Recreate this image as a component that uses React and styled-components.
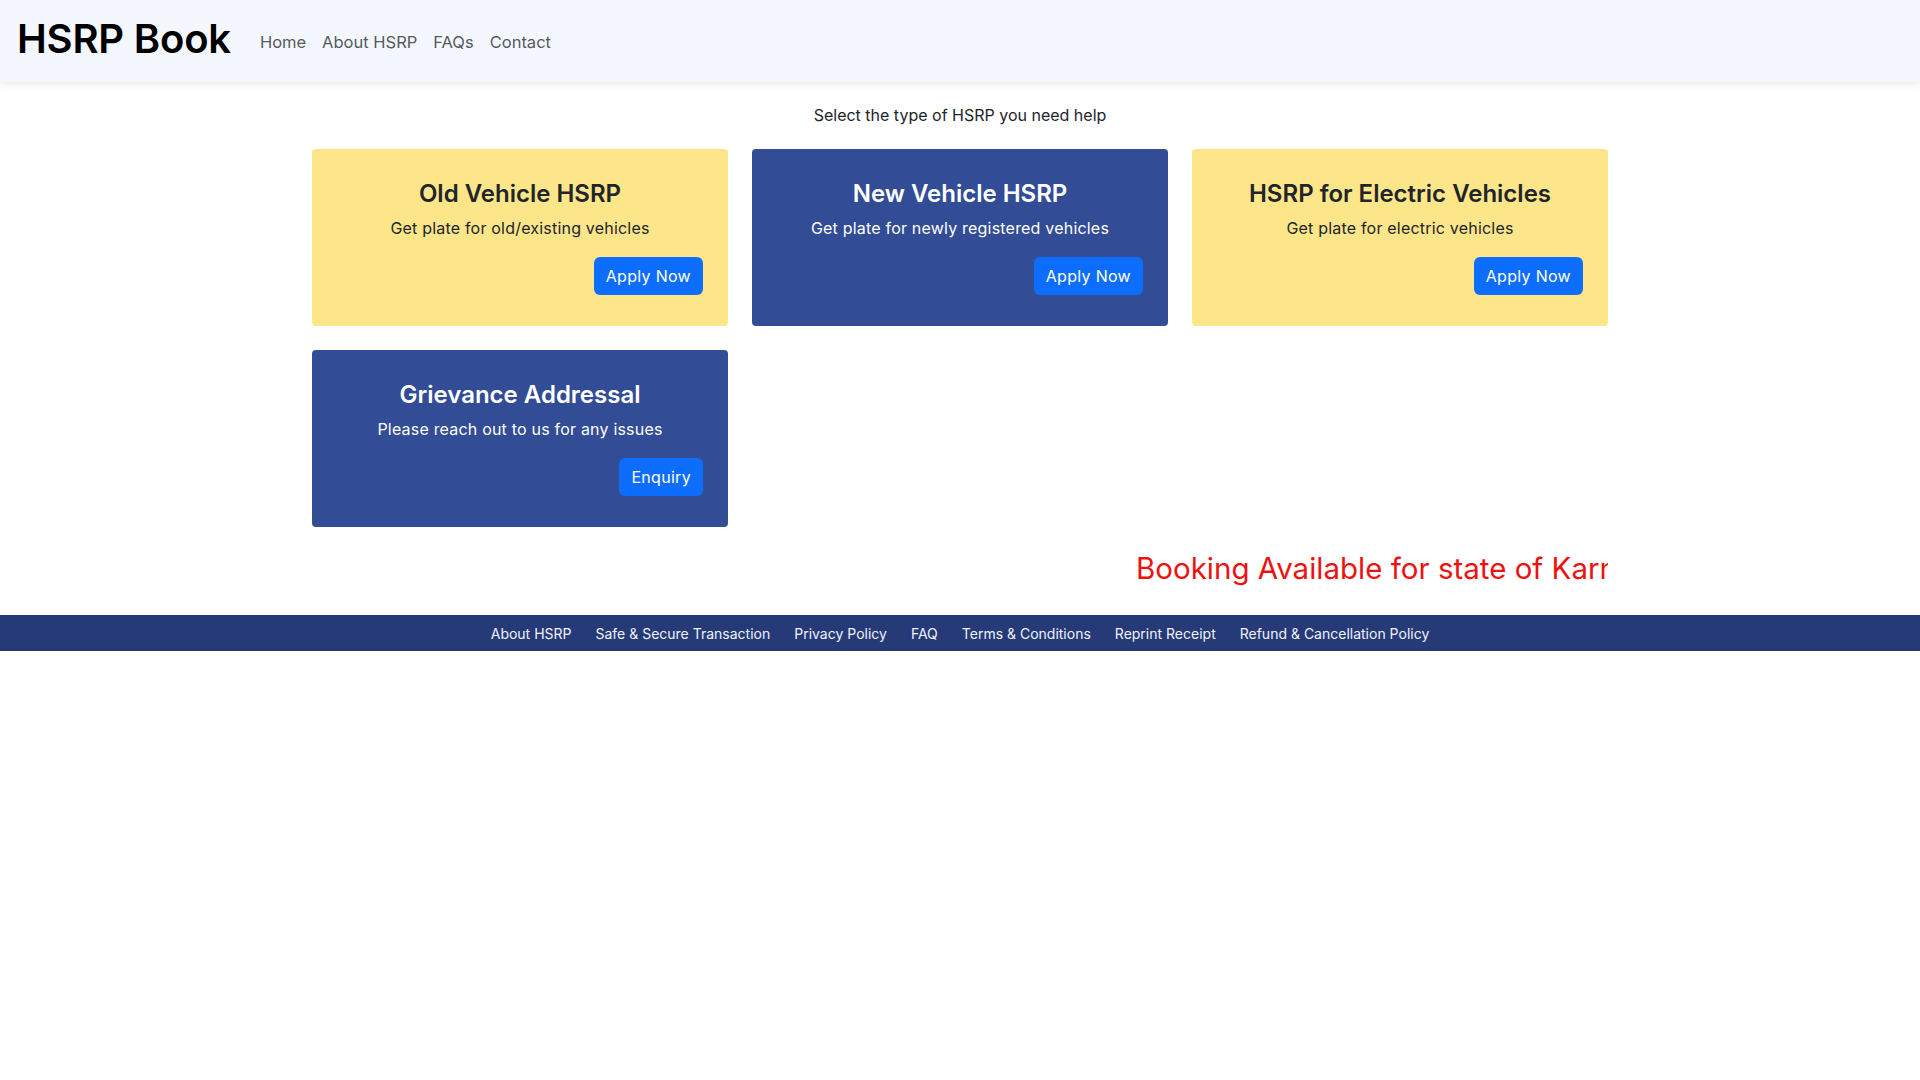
import React from 'react';
import styled, { createGlobalStyle } from 'styled-components';

const GlobalStyle = createGlobalStyle`
  body {
    margin: 0;
    background: #ffffff;
    font-family: Inter, "Open Sans", Arial, sans-serif;
    color: #212529;
  }
  * {
    box-sizing: border-box;
  }
`;

const Header = styled.header`
  height: 82px;
  display: flex;
  align-items: center;
  padding: 0 17px;
  background-color: #f4f8fe;
  box-shadow: 0 2px 8px rgba(0, 0, 0, 0.09);
`;

const Brand = styled.a`
  font-size: 40px;
  font-weight: 600;
  color: #000;
  text-decoration: none;
  letter-spacing: -0.2px;
  margin-right: 29px;
  margin-top: -6px;
`;

const Nav = styled.nav`
  display: flex;
  gap: 16px;
  margin-top: 2px;

  a {
    font-size: 16.5px;
    color: #555a60;
    text-decoration: none;
  }
`;

const Main = styled.main`
  width: 1296px;
  margin: 0 auto;
`;

const Intro = styled.p`
  margin: 21px 0 22px;
  text-align: center;
  font-size: 16px;
  line-height: 24px;
  color: #212529;
`;

const Grid = styled.div`
  display: grid;
  grid-template-columns: repeat(3, 1fr);
  gap: 24px;
`;

const Card = styled.div`
  display: flex;
  flex-direction: column;
  height: 177px;
  padding: 31px 25px 30px;
  border-radius: 4px;
  background-color: ${(p) => (p.$tone === 'blue' ? '#324c96' : '#fde58a')};
  color: ${(p) => (p.$tone === 'blue' ? '#ffffff' : '#212529')};
  text-align: center;
`;

const CardTitle = styled.h3`
  margin: 0 0 7px;
  font-size: 24px;
  line-height: 1.2;
  font-weight: 600;
`;

const CardText = styled.p`
  margin: 0 0 17px;
  font-size: 16px;
  line-height: 24px;
  letter-spacing: 0.2px;
`;

const Button = styled.button`
  align-self: flex-end;
  height: 38px;
  padding: 0 12px;
  border: none;
  border-radius: 6px;
  background-color: #0d6efd;
  color: #ffffff;
  font-family: inherit;
  font-size: 16px;
  letter-spacing: 0.3px;
  cursor: pointer;
`;

const Marquee = styled.div`
  margin: 20px 0 26px;
  overflow: hidden;
  white-space: nowrap;
  padding-left: 824px;
  font-size: 29.5px;
  line-height: 42px;
  color: #ee1111;
`;

const Footer = styled.footer`
  height: 36px;
  display: flex;
  align-items: center;
  justify-content: center;
  gap: 24px;
  background-color: #263a78;

  a {
    font-size: 14px;
    color: #eef2fb;
    text-decoration: none;
  }
`;

const cards = [
  { title: 'Old Vehicle HSRP', text: 'Get plate for old/existing vehicles', action: 'Apply Now', tone: 'yellow' },
  { title: 'New Vehicle HSRP', text: 'Get plate for newly registered vehicles', action: 'Apply Now', tone: 'blue' },
  { title: 'HSRP for Electric Vehicles', text: 'Get plate for electric vehicles', action: 'Apply Now', tone: 'yellow' },
  { title: 'Grievance Addressal', text: 'Please reach out to us for any issues', action: 'Enquiry', tone: 'blue' },
];

const footerLinks = [
  'About HSRP',
  'Safe & Secure Transaction',
  'Privacy Policy',
  'FAQ',
  'Terms & Conditions',
  'Reprint Receipt',
  'Refund & Cancellation Policy',
];

const App = () => {
  return (
    <>
      <GlobalStyle />
      <Header>
        <Brand href="#">HSRP Book</Brand>
        <Nav>
          <a href="#">Home</a>
          <a href="#">About HSRP</a>
          <a href="#">FAQs</a>
          <a href="#">Contact</a>
        </Nav>
      </Header>
      <Main>
        <Intro>Select the type of HSRP you need help</Intro>
        <Grid>
          {cards.map((card) => (
            <Card key={card.title} $tone={card.tone}>
              <CardTitle>{card.title}</CardTitle>
              <CardText>{card.text}</CardText>
              <Button>{card.action}</Button>
            </Card>
          ))}
        </Grid>
        {/* scrolling notice, clipped at the container edge like the live marquee */}
        <Marquee>Booking Available for state of Karnataka</Marquee>
      </Main>
      <Footer>
        {footerLinks.map((link) => (
          <a key={link} href="#">{link}</a>
        ))}
      </Footer>
    </>
  );
};

export default App;
